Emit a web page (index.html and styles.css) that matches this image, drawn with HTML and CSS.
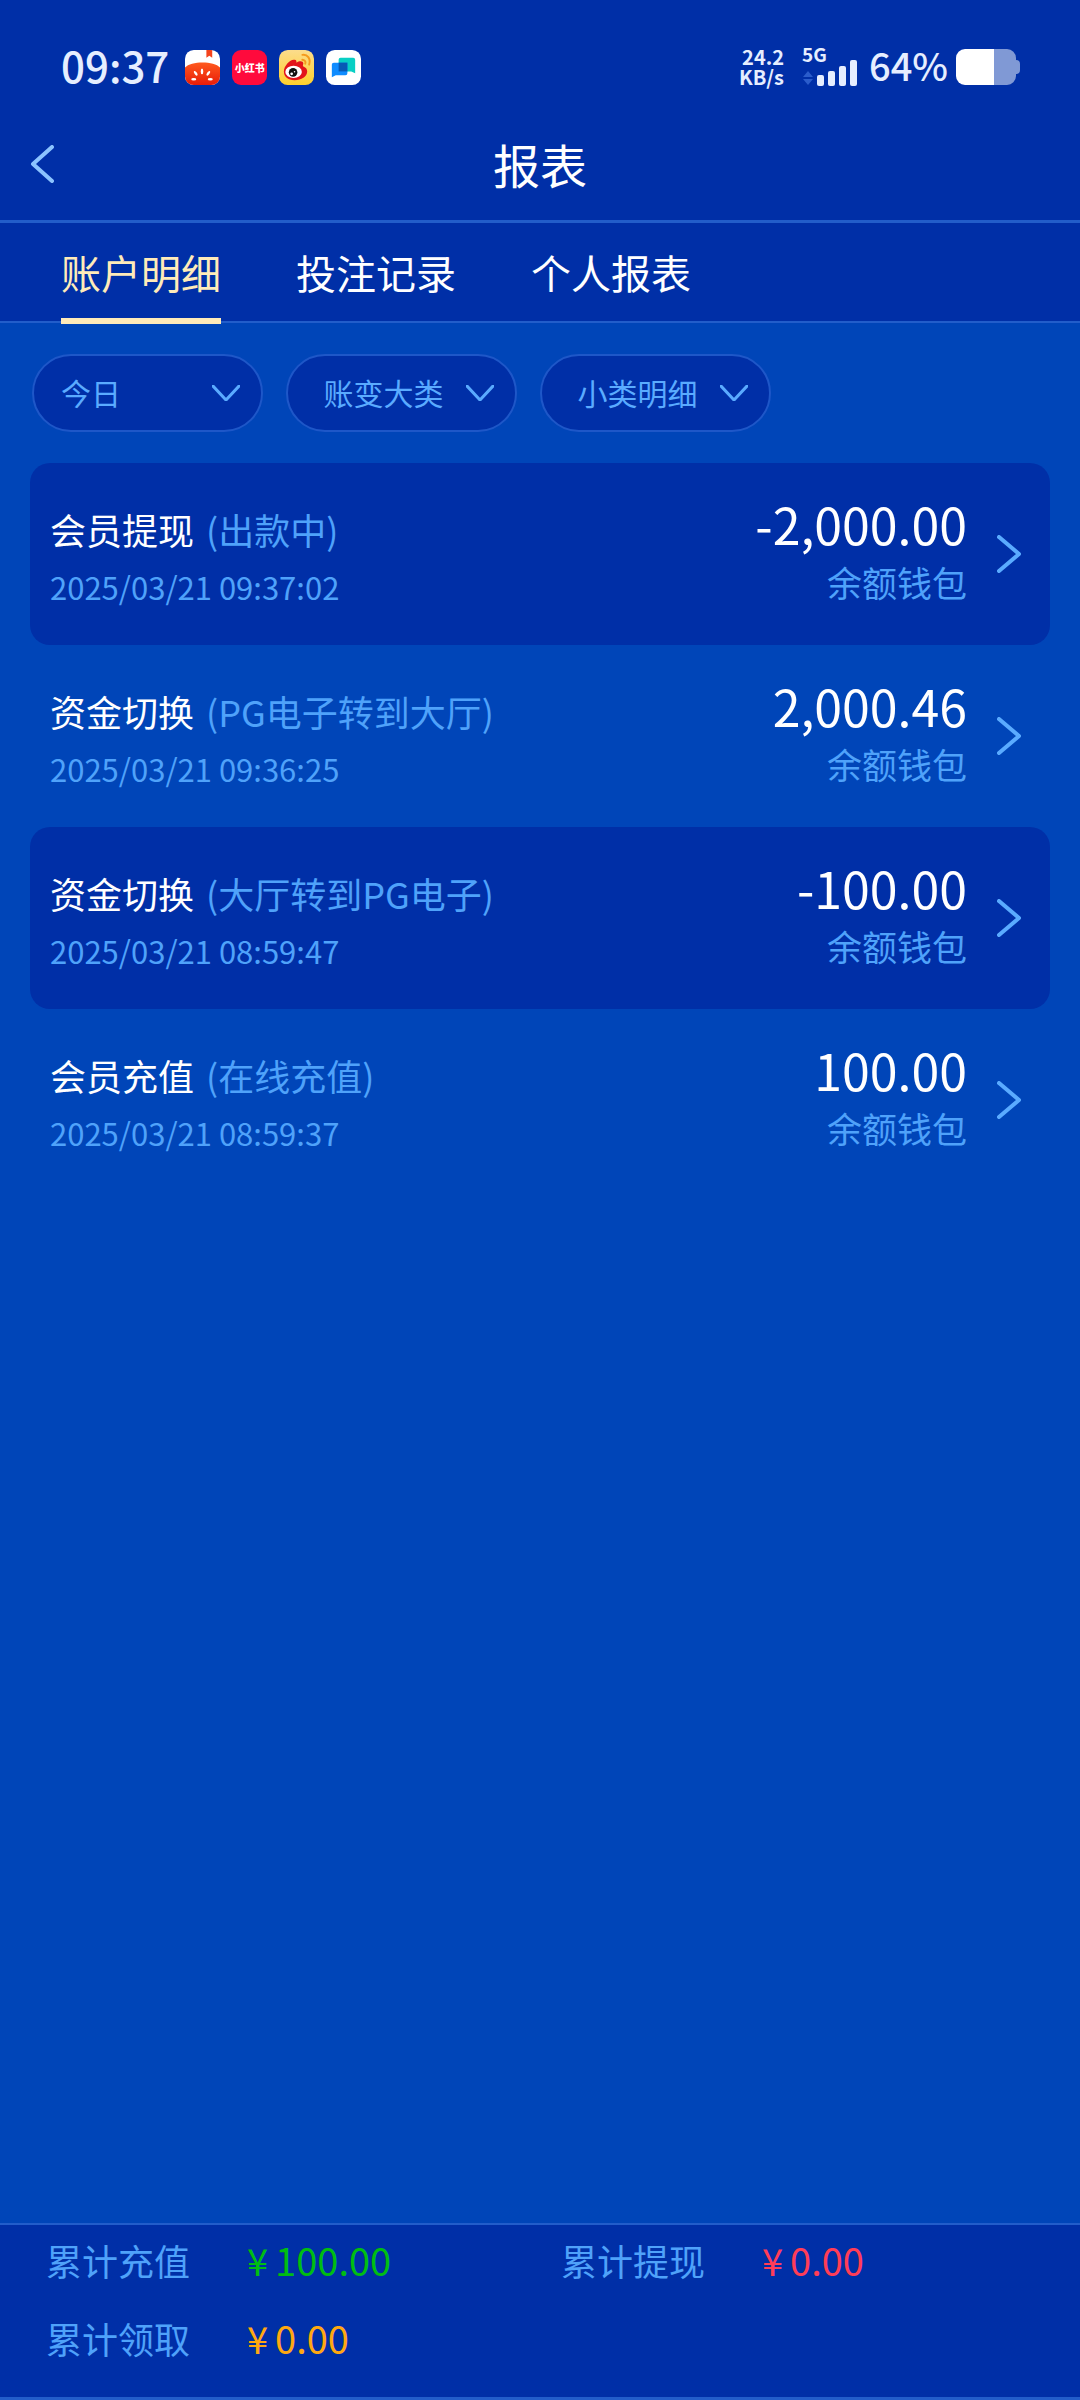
FILE: index.html
```html
<!doctype html>
<html lang="zh-CN">
  <head>
    <meta charset="UTF-8" />
    <meta name="viewport" content="width=device-width, initial-scale=1.0" />
    <title>报表</title>
    <link rel="stylesheet" href="styles.css">
  </head>
  <body>
    <header class="top">
      <div class="status-bar">
        <div class="status-left">
          <span class="clock">09:37</span>
          <svg class="app-icon" viewBox="0 0 36 36">
            <defs>
              <clipPath id="appClip"><rect width="36" height="36" rx="9" /></clipPath>
              <linearGradient id="tomato" x1="0" y1="0" x2="0" y2="1">
                <stop offset="0" stop-color="#ff5a1f" />
                <stop offset="1" stop-color="#e81c08" />
              </linearGradient>
              <linearGradient id="sun" x1="0" y1="0" x2="0" y2="1">
                <stop offset="0" stop-color="#fbdc8c" />
                <stop offset="1" stop-color="#ffd02c" />
              </linearGradient>
            </defs>
            <g clip-path="url(#appClip)">
              <rect width="36" height="36" fill="#fff" />
              <path d="M22 0h6v8l-3-2-3 2z" fill="#f4431c" />
              <path d="M0 18c6-7 30-7 36 0v18H0z" fill="url(#tomato)" />
              <g fill="#fff">
                <ellipse cx="17.500" cy="22" rx="1.300" ry="3" />
                <ellipse cx="11" cy="24" rx="1.300" ry="2.800" transform="rotate(-35 11 24)" />
                <ellipse cx="24" cy="24" rx="1.300" ry="2.800" transform="rotate(35 24 24)" />
                <ellipse cx="9" cy="30" rx="2.600" ry="1.300" />
                <ellipse cx="26" cy="30" rx="2.600" ry="1.300" />
              </g>
            </g>
          </svg>
          <span class="app-icon app-red">小红书</span>
          <svg class="app-icon" viewBox="0 0 36 36">
            <rect width="36" height="36" rx="9" fill="url(#sun)" />
            <path d="M5 22c0-6 7-13 11-12 2 0 2 2 2 3 3-2 7-2 7 1 0 1-1 2 0 3 3 1 4 3 4 5 0 5-6 9-13 9S5 27 5 22z" fill="#e3141b" />
            <ellipse cx="15" cy="22.500" rx="8.500" ry="6.200" fill="#fff" />
            <circle cx="14.500" cy="23" r="4.400" fill="#111" />
            <circle cx="13" cy="24.500" r="1.400" fill="#fff" />
            <circle cx="16" cy="22.300" r=".8" fill="#fff" />
            <path d="M24 5c5-1 9 4 7 10M24 10c2 0 4 2 3 4" fill="none" stroke="#f49a1c" stroke-width="2" stroke-linecap="round" />
          </svg>
          <svg class="app-icon" viewBox="0 0 36 36">
            <rect width="36" height="36" rx="9" fill="#fff" />
            <path d="M15 8h13a2 2 0 0 1 2 2v14l-4-2H15a2 2 0 0 1-2-2V10a2 2 0 0 1 2-2z" fill="#08cfc4" />
            <path d="M8 13h14v11a2 2 0 0 1-2 2H10l-4 2V15a2 2 0 0 1 2-2z" fill="#0f8cff" />
            <path d="M13 13h9v9h-9z" fill="#0759b5" />
          </svg>
        </div>
        <div class="status-right">
          <div class="net-speed"><span>24.2</span><span>KB/s</span></div>
          <div class="signal">
            <span class="signal-type">5G</span>
            <svg class="signal-bars" viewBox="0 0 56 26">
              <path d="M6 11l5 6H1zM6 25l5-6H1z" fill="#2a5ccb" />
              <g fill="#e6eeff">
                <rect x="15" y="15" width="7" height="11" rx="2" />
                <rect x="26" y="11" width="7" height="15" rx="2" />
                <rect x="37" y="6" width="7" height="20" rx="2" />
                <rect x="48" y="0" width="7" height="26" rx="2" />
              </g>
            </svg>
          </div>
          <span class="battery-level">64%</span>
          <svg class="battery" viewBox="0 0 64 36">
            <path d="M38 0h13a9 9 0 0 1 9 9v2q4 0 4 4v6q0 4-4 4v2a9 9 0 0 1-9 9H38z" fill="#8099d5" />
            <path d="M9 0h29v36H9a9 9 0 0 1-9-9V9a9 9 0 0 1 9-9z" fill="#fff" />
          </svg>
        </div>
      </div>

      <div class="title-bar">
        <button class="back" type="button" aria-label="返回">
          <svg viewBox="0 0 24 38"><path d="M22 2L3 19l19 17" /></svg>
        </button>
        <h1>报表</h1>
      </div>

      <nav class="tabs">
        <a class="tab active" href="#">账户明细</a>
        <a class="tab" href="#">投注记录</a>
        <a class="tab" href="#">个人报表</a>
      </nav>
    </header>

    <main>
      <form class="filters">
        <label class="filter filter-date">
          <select aria-label="日期"><option>今日</option></select>
          <svg viewBox="0 0 28 16"><path d="M1 1l13 14L27 1" /></svg>
        </label>
        <label class="filter">
          <select aria-label="账变大类"><option>账变大类</option></select>
          <svg viewBox="0 0 28 16"><path d="M1 1l13 14L27 1" /></svg>
        </label>
        <label class="filter">
          <select aria-label="小类明细"><option>小类明细</option></select>
          <svg viewBox="0 0 28 16"><path d="M1 1l13 14L27 1" /></svg>
        </label>
      </form>

      <ul class="records">
        <li>
          <a class="record" href="#">
            <div class="record-info">
              <div class="record-name">会员提现 <span>(出款中)</span></div>
              <time>2025/03/21 09:37:02</time>
            </div>
            <div class="record-money">
              <strong>-2,000.00</strong>
              <span>余额钱包</span>
            </div>
            <svg class="arrow" viewBox="0 0 24 38"><path d="M2 2l20 17L2 36" /></svg>
          </a>
        </li>
        <li>
          <a class="record" href="#">
            <div class="record-info">
              <div class="record-name">资金切换 <span>(PG电子转到大厅)</span></div>
              <time>2025/03/21 09:36:25</time>
            </div>
            <div class="record-money">
              <strong>2,000.46</strong>
              <span>余额钱包</span>
            </div>
            <svg class="arrow" viewBox="0 0 24 38"><path d="M2 2l20 17L2 36" /></svg>
          </a>
        </li>
        <li>
          <a class="record" href="#">
            <div class="record-info">
              <div class="record-name">资金切换 <span>(大厅转到PG电子)</span></div>
              <time>2025/03/21 08:59:47</time>
            </div>
            <div class="record-money">
              <strong>-100.00</strong>
              <span>余额钱包</span>
            </div>
            <svg class="arrow" viewBox="0 0 24 38"><path d="M2 2l20 17L2 36" /></svg>
          </a>
        </li>
        <li>
          <a class="record" href="#">
            <div class="record-info">
              <div class="record-name">会员充值 <span>(在线充值)</span></div>
              <time>2025/03/21 08:59:37</time>
            </div>
            <div class="record-money">
              <strong>100.00</strong>
              <span>余额钱包</span>
            </div>
            <svg class="arrow" viewBox="0 0 24 38"><path d="M2 2l20 17L2 36" /></svg>
          </a>
        </li>
      </ul>
    </main>

    <footer class="totals">
      <div class="total">
        <span class="total-label">累计充值</span>
        <span class="total-value green"><i>¥</i>100.00</span>
      </div>
      <div class="total">
        <span class="total-label">累计提现</span>
        <span class="total-value red"><i>¥</i>0.00</span>
      </div>
      <div class="total">
        <span class="total-label">累计领取</span>
        <span class="total-value orange"><i>¥</i>0.00</span>
      </div>
    </footer>
  </body>
</html>
```
FILE: styles.css
```css
* {
  box-sizing: border-box;
}

body {
  margin: 0;
  min-height: 100vh;
  display: flex;
  flex-direction: column;
  background-color: #0045b8;
  color: #fff;
  font-family: "Noto Sans CJK SC", "Noto Sans", sans-serif;
}

a {
  color: inherit;
  text-decoration: none;
}

.top {
  background-color: #002fa7;
}

/* status bar */
.status-bar {
  display: flex;
  justify-content: space-between;
  align-items: center;
  height: 110px;
  padding: 24px 60px 0 61px;
  color: #e6eeff;
}

.status-left {
  display: flex;
  align-items: center;
  gap: 12px;
}

.clock {
  margin-right: 4px;
  padding-bottom: 4px;
  font-size: 42px;
  font-weight: 500;
  line-height: 48px;
}

.app-icon {
  width: 35px;
  height: 35px;
}

.app-red {
  border-radius: 9px;
  background-color: #ff0a3c;
  color: #fff;
  font-size: 10px;
  font-weight: 900;
  line-height: 35px;
  text-align: center;
}

.status-right {
  display: flex;
  align-items: center;
}

.net-speed {
  display: flex;
  flex-direction: column;
  align-items: flex-end;
  font-size: 20px;
  font-weight: 700;
  line-height: 20px;
}

.signal {
  display: flex;
  flex-direction: column;
  margin-left: 18px;
}

.signal-type {
  font-size: 19px;
  font-weight: 700;
  line-height: 12px;
}

.signal-bars {
  width: 56px;
  height: 26px;
}

.battery-level {
  margin: 0 8px 0 11px;
  padding-bottom: 4px;
  font-size: 38px;
  font-weight: 500;
  line-height: 48px;
}

.battery {
  width: 64px;
  height: 36px;
}

/* title */
.title-bar {
  display: flex;
  align-items: center;
  height: 113px;
  padding: 0 30px 2px;
  border-bottom: 3px solid #225dca;
}

.back {
  width: 80px;
  height: 80px;
  padding: 0;
  border: 0;
  background: none;
  text-align: left;
  cursor: pointer;
}

.back svg {
  display: block;
  width: 24px;
  height: 38px;
}

.back path,
.filter path,
.arrow path {
  fill: none;
  stroke: #5aabff;
  stroke-width: 4;
  stroke-linecap: round;
  stroke-linejoin: round;
}

.back path {
  stroke: #8cc4ff;
}

h1 {
  flex: 1;
  margin: 0 80px 0 0;
  font-size: 47px;
  font-weight: 400;
  line-height: 60px;
  text-align: center;
}

/* tabs */
.tabs {
  display: flex;
  gap: 75px;
  height: 100px;
  padding-left: 61px;
  border-bottom: 2px solid #225dca;
}

.tab {
  height: 101px;
  border-bottom: 6px solid transparent;
  font-size: 40px;
  line-height: 98px;
}

.tab.active {
  border-bottom-color: #ffebb9;
  color: #ffebb9;
}

main {
  flex: 1;
}

/* filters */
.filters {
  display: flex;
  gap: 23px;
  padding: 31px 32px;
}

.filter {
  position: relative;
  width: 231px;
}

.filter select {
  appearance: none;
  display: block;
  width: 100%;
  height: 78px;
  padding: 0 66px 2px 30px;
  border: 2px solid #1e57c8;
  border-radius: 39px;
  background-color: #002fa7;
  color: #5aabff;
  font-family: inherit;
  font-size: 30px;
  text-align: center;
  text-align-last: center;
}

.filter-date select {
  padding-left: 27px;
  text-align: left;
  text-align-last: left;
}

/* chevron drawn over the select */
.filter svg {
  position: absolute;
  top: 31px;
  right: 23px;
  width: 28px;
  height: 16px;
  pointer-events: none;
}

.filter path {
  stroke-width: 3;
}

/* records */
.records {
  margin: 0;
  padding: 0 30px;
  list-style: none;
}

.record {
  display: flex;
  padding: 30px 29px 34px 20px;
  border-radius: 20px;
  color: #4fa2fa;
}

.records li:nth-child(odd) .record {
  background-color: #002fa7;
}

.record-info {
  flex: 1;
  padding-top: 10px;
}

.record-name {
  color: #fff;
  font-size: 36px;
  line-height: 52px;
}

.record-name span {
  margin-left: 4px;
  color: #4fa2fa;
}

.record time {
  display: block;
  margin-top: 8px;
  font-size: 31px;
  line-height: 48px;
}

.record-money {
  display: flex;
  flex-direction: column;
  align-items: flex-end;
  font-size: 35px;
  line-height: 50px;
}

.record-money strong {
  color: #fff;
  font-size: 50px;
  font-weight: 400;
  line-height: 60px;
  margin-bottom: 4px;
}

.arrow {
  align-self: center;
  width: 24px;
  height: 38px;
  margin: 4px 0 0 30px;
}

/* totals */
.totals {
  display: grid;
  grid-template-columns: 1fr 1fr;
  row-gap: 28px;
  padding: 10px 4px 34px 46px;
  border-top: 2px solid #225dca;
  border-bottom: 3px solid #225dca;
  background-color: #002fa7;
  line-height: 50px;
}

.total {
  display: flex;
  gap: 57px;
}

.total-label {
  color: #4fa2fa;
  font-size: 36px;
}

.total-value {
  font-size: 38px;
}

.total-value i {
  margin-right: 7px;
  font-style: normal;
}

.green {
  color: #00bd12;
}

.red {
  color: #ff3d57;
}

.orange {
  color: #ffa811;
}
```
